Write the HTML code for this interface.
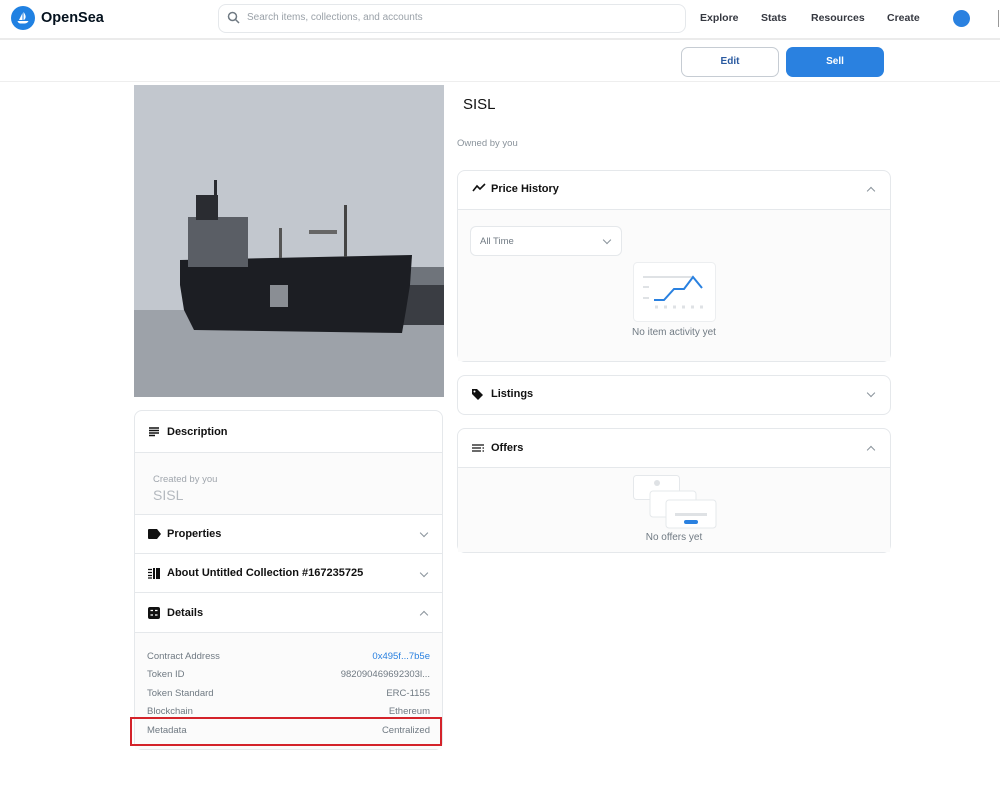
<!DOCTYPE html>
<html><head><meta charset="utf-8"><style>
*{box-sizing:border-box;margin:0;padding:0}
body{width:1000px;height:793px;background:#fff;font-family:"Liberation Sans",sans-serif;color:#04111d;position:relative;overflow:hidden}
.a{position:absolute}
.card{position:absolute;border:1px solid #e5e8eb;border-radius:8px;background:#fff}
.hd{font-weight:bold;font-size:11px;color:#111}
.sep{position:absolute;left:0;right:0;height:1px;background:#e5e8eb}
.chev{position:absolute;width:6px;height:6px;border-right:1.3px solid #8a939b;border-bottom:1.3px solid #8a939b}
.down{transform:rotate(45deg)}
.up{transform:rotate(-135deg)}
.row{position:absolute;left:12px;right:12px;font-size:9.5px;color:#707a83}
.row span{position:absolute;right:0}
</style></head><body>
<!-- header -->
<div class="a" style="left:0;top:0;width:1000px;height:40px;background:#fff;border-bottom:2px solid #ebebeb"></div>
<div class="a" style="left:11px;top:6px;width:24px;height:24px;border-radius:50%;background:#2081e2"></div>
<svg class="a" style="left:14px;top:9px" width="18" height="18" viewBox="0 0 18 18"><path d="M5 11 L8.5 4 L8.5 11Z M9.5 3 C12 6 12.5 9 10 11 L9.5 11Z M3.5 12 H14.5 C13.5 14 12 14.5 10 14.5 H7 C5 14.5 4 13.5 3.5 12Z" fill="#fff"/></svg>
<div class="a" style="left:41px;top:10px;font-weight:bold;font-size:14.5px">OpenSea</div>
<div class="a" style="left:218px;top:4px;width:468px;height:29px;border:1px solid #e5e8eb;border-radius:8px"></div>
<svg class="a" style="left:227px;top:11px" width="13" height="13" viewBox="0 0 13 13"><circle cx="5.5" cy="5.5" r="4" fill="none" stroke="#707a83" stroke-width="1.5"/><path d="M8.5 8.5 L12 12" stroke="#707a83" stroke-width="1.5"/></svg>
<div class="a" style="left:247px;top:12px;font-size:10px;color:#9aa1a8">Search items, collections, and accounts</div>
<div class="a" style="left:700px;top:12px;font-size:10.5px;font-weight:bold;color:#353840">Explore</div>
<div class="a" style="left:761px;top:12px;font-size:10.5px;font-weight:bold;color:#353840">Stats</div>
<div class="a" style="left:811px;top:12px;font-size:10.5px;font-weight:bold;color:#353840">Resources</div>
<div class="a" style="left:887px;top:12px;font-size:10.5px;font-weight:bold;color:#353840">Create</div>
<div class="a" style="left:953px;top:10px;width:17px;height:17px;border-radius:50%;background:#2a81e0"></div>
<div class="a" style="left:998px;top:10px;width:1px;height:17px;background:#999"></div>
<!-- subheader -->
<div class="a" style="left:0;top:42px;width:1000px;height:40px;background:#fff;border-bottom:1px solid #eee"></div>
<div class="a" style="left:681px;top:47px;width:98px;height:30px;border:1px solid #c6ccd3;border-radius:7px;text-align:center;line-height:28px;font-size:10px;font-weight:bold;color:#2a5aa0">Edit</div>
<div class="a" style="left:786px;top:47px;width:98px;height:30px;background:#2a81e0;border-radius:7px;text-align:center;line-height:30px;font-size:10px;font-weight:bold;color:#fff">Sell</div>
<!-- image -->
<svg class="a" style="left:134px;top:85px" width="310" height="312" viewBox="0 0 310 312">
<rect width="310" height="312" fill="#c2c7ce"/>
<rect y="225" width="310" height="87" fill="#9da2a9"/>
<rect x="245" y="182" width="65" height="58" fill="#6f747b"/>
<rect x="245" y="200" width="65" height="40" fill="#3a3d43"/>
<path d="M46 175 L278 170 L276 200 L272 225 L268 248 L60 245 L50 225 L46 200Z" fill="#1c1e23"/>
<rect x="54" y="132" width="60" height="50" fill="#5a5e65"/>
<rect x="62" y="110" width="22" height="25" fill="#2a2c31"/>
<rect x="80" y="95" width="3" height="40" fill="#2a2c31"/>
<rect x="210" y="120" width="3" height="52" fill="#444"/>
<rect x="145" y="143" width="3" height="30" fill="#555"/>
<rect x="175" y="145" width="28" height="4" fill="#666"/>
<rect x="136" y="200" width="18" height="22" fill="#8a8e94"/>
</svg>
<!-- left card -->
<div class="card" style="left:134px;top:410px;width:309px;height:340px">
 <svg class="a" style="left:13px;top:15px" width="12" height="11"><path d="M1 2H11M1 4.5H11M1 7H11M1 9.5H7" stroke="#111" stroke-width="1.4"/></svg>
 <div class="a hd" style="left:32px;top:15px">Description</div>
 <div class="sep" style="top:41px"></div>
 <div class="a" style="left:0;top:42px;width:307px;height:61px;background:#fbfbfb"></div>
 <div class="a" style="left:18px;top:63px;font-size:9.5px;color:#a0a6ad">Created by you</div>
 <div class="a" style="left:18px;top:76px;font-size:14px;color:#b4b9bf">SISL</div>
 <div class="sep" style="top:103px"></div>
 <svg class="a" style="left:13px;top:118px" width="13" height="10"><path d="M0 1Q0 0 1 0H9L13 5L9 10H1Q0 10 0 9Z" fill="#111"/></svg>
 <div class="a hd" style="left:32px;top:117px">Properties</div>
 <div class="chev down" style="left:286px;top:119px"></div>
 <div class="sep" style="top:142px"></div>
 <svg class="a" style="left:13px;top:157px" width="12" height="11"><path d="M0 1.5H4M0 4.5H4M0 7.5H4M0 10H4" stroke="#111" stroke-width="1.3"/><rect x="5" y="0" width="2" height="11" fill="#111"/><rect x="8" y="0" width="4" height="11" fill="#111"/></svg>
 <div class="a hd" style="left:32px;top:156px">About Untitled Collection #167235725</div>
 <div class="chev down" style="left:286px;top:159px"></div>
 <div class="sep" style="top:181px"></div>
 <svg class="a" style="left:13px;top:196px" width="12" height="12"><rect width="12" height="12" rx="2" fill="#111"/><path d="M2.5 3.5H5M2.5 8H5M7 3.5H9.5M7 8H9.5" stroke="#fff" stroke-width="1.2"/></svg>
 <div class="a hd" style="left:32px;top:196px">Details</div>
 <div class="chev up" style="left:286px;top:201px"></div>
 <div class="sep" style="top:221px"></div>
 <div class="a" style="left:0;top:222px;width:307px;height:116px;background:#fbfbfb"></div>
 <div class="row" style="top:240px">Contract Address<span style="color:#2a81e0">0x495f...7b5e</span></div>
 <div class="row" style="top:258px">Token ID<span>982090469692303l...</span></div>
 <div class="row" style="top:277px">Token Standard<span>ERC-1155</span></div>
 <div class="row" style="top:295px">Blockchain<span>Ethereum</span></div>
 <div class="row" style="top:314px">Metadata<span>Centralized</span></div>
</div>
<div class="a" style="left:130px;top:717px;width:312px;height:29px;border:2px solid #d4232a"></div>
<!-- right -->
<div class="a" style="left:463px;top:96px;font-size:15px;color:#111">SISL</div>
<div class="a" style="left:457px;top:138px;font-size:9.5px;color:#8a939b">Owned by you</div>
<div class="card" style="left:457px;top:170px;width:434px;height:192px">
 <svg class="a" style="left:14px;top:12px" width="14" height="10"><path d="M1 8L5 3L8 6L13 1" fill="none" stroke="#111" stroke-width="1.6"/></svg>
 <div class="a hd" style="left:33px;top:12px">Price History</div>
 <div class="chev up" style="left:410px;top:17px"></div>
 <div class="sep" style="top:38px"></div>
 <div class="a" style="left:0;top:39px;width:432px;height:151px;background:#fbfbfb"></div>
 <div class="a" style="left:12px;top:55px;width:152px;height:30px;border:1px solid #e5e8eb;border-radius:6px;background:#fff"></div>
 <div class="a" style="left:22px;top:65px;font-size:9.5px;color:#707a83">All Time</div>
 <div class="chev down" style="left:146px;top:66px"></div>
 <svg class="a" style="left:175px;top:91px" width="83" height="60"><rect x="0.5" y="0.5" width="82" height="59" rx="4" fill="#fff" stroke="#eceef0"/><path d="M10 15H20M10 25H16M10 36H16M20 15H60" stroke="#dfe2e5" stroke-width="2"/><path d="M21 38H31L41 27H51L60 15L69 26" fill="none" stroke="#2a81e0" stroke-width="2"/><path d="M22 45H70" stroke="#dfe2e5" stroke-width="3" stroke-dasharray="3 6"/></svg>
 <div class="a" style="left:0;width:432px;top:156px;text-align:center;font-size:10px;color:#707a83">No item activity yet</div>
</div>
<div class="card" style="left:457px;top:375px;width:434px;height:40px">
 <svg class="a" style="left:13px;top:12px" width="13" height="13"><path d="M1 1H6L12 7L7 12L1 6Z" fill="#111"/><circle cx="3.5" cy="3.5" r="1" fill="#fff"/></svg>
 <div class="a hd" style="left:33px;top:12px">Listings</div>
 <div class="chev down" style="left:410px;top:14px"></div>
</div>
<div class="card" style="left:457px;top:428px;width:434px;height:125px">
 <svg class="a" style="left:14px;top:15px" width="12" height="8"><path d="M0 1H12M0 4H9M0 7H9M10.5 4H12M10.5 7H12" stroke="#111" stroke-width="1.2"/></svg>
 <div class="a hd" style="left:33px;top:13px">Offers</div>
 <div class="chev up" style="left:410px;top:18px"></div>
 <div class="sep" style="top:38px"></div>
 <div class="a" style="left:0;top:39px;width:432px;height:84px;background:#fbfbfb"></div>
 <svg class="a" style="left:175px;top:46px" width="85" height="55"><rect x="0.5" y="0.5" width="46" height="24" rx="3" fill="#fff" stroke="#e5e8eb"/><rect x="17" y="16" width="46" height="26" rx="3" fill="#fff" stroke="#e5e8eb"/><rect x="33" y="25" width="50" height="28" rx="3" fill="#fff" stroke="#e5e8eb"/><circle cx="24" cy="8" r="3" fill="#dfe2e5"/><rect x="42" y="38" width="32" height="3" fill="#dfe2e5"/><rect x="51" y="45" width="14" height="4" rx="2" fill="#2a81e0"/></svg>
 <div class="a" style="left:0;width:432px;top:103px;text-align:center;font-size:10px;color:#707a83">No offers yet</div>
</div>
</body></html>
